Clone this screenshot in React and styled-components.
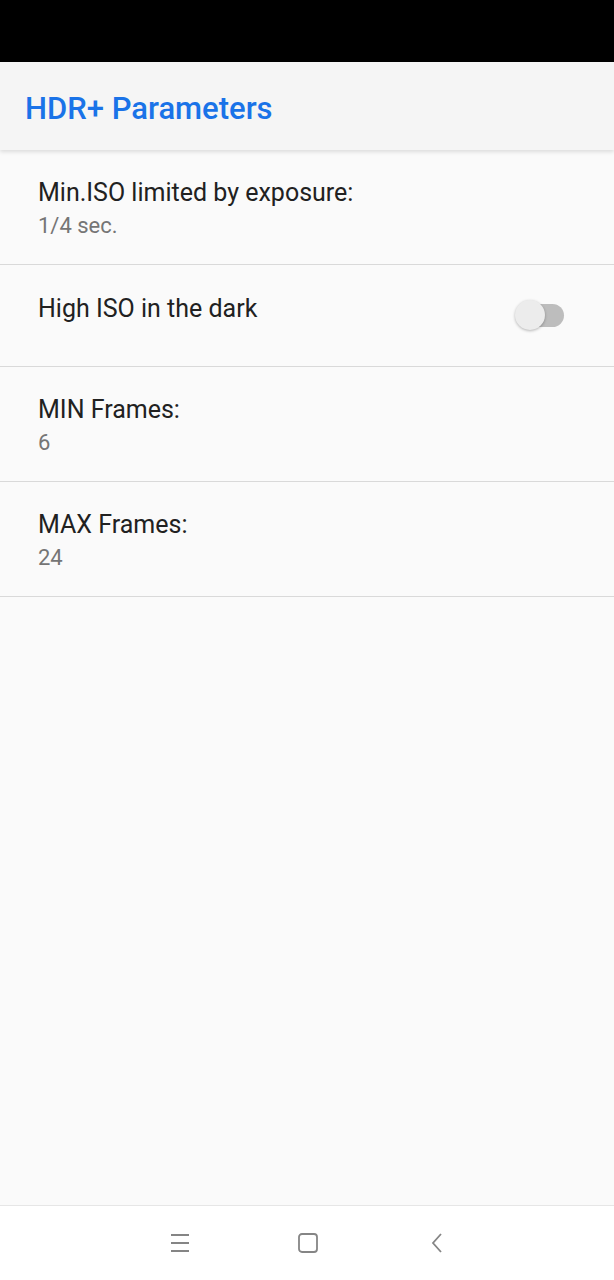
import React from 'react';
import styled, { createGlobalStyle } from 'styled-components';

const GlobalStyle = createGlobalStyle`
  html, body {
    margin: 0;
    padding: 0;
    background: #fafafa;
  }
  body {
    font-family: Roboto, "Noto Sans", sans-serif;
  }
`;

const Screen = styled.div`
  width: 614px;
  height: 1280px;
  display: flex;
  flex-direction: column;
  background: #fafafa;
  overflow: hidden;
`;

const StatusBar = styled.div`
  height: 62px;
  flex-shrink: 0;
  background: #000;
`;

const Header = styled.header`
  height: 88px;
  flex-shrink: 0;
  display: flex;
  align-items: center;
  padding-left: 25px;
  padding-top: 4px;
  box-sizing: border-box;
  background: #f5f5f5;
  box-shadow: 0 2px 4px rgba(0, 0, 0, 0.12);
  position: relative;
  z-index: 1;
`;

const Title = styled.h1`
  margin: 0;
  font-size: 31px;
  font-weight: 500;
  color: #1a73e8;
`;

const List = styled.div`
  flex: 1;
  display: flex;
  flex-direction: column;
`;

const Row = styled.div`
  display: flex;
  align-items: flex-start;
  justify-content: space-between;
  padding: ${(p) => (p.$switch ? '27px 50px 39px 38px' : '26px 38px 23px 38px')};
  border-bottom: 1px solid #d9d9d9;
`;

const Texts = styled.div`
  display: flex;
  flex-direction: column;
`;

const Label = styled.div`
  font-size: 25px;
  line-height: 33px;
  color: #212121;
`;

const Value = styled.div`
  margin-top: 2px;
  font-size: 22px;
  line-height: 30px;
  color: #757575;
`;

const Switch = styled.div`
  position: relative;
  width: 44px;
  height: 23px;
  margin-top: 12px;
  border-radius: 12px;
  background: #bdbdbd;
`;

const Thumb = styled.div`
  position: absolute;
  left: -5px;
  top: -4px;
  width: 30px;
  height: 30px;
  border-radius: 50%;
  background: #ececec;
  box-shadow: 0 1px 3px rgba(0, 0, 0, 0.28);
`;

const NavBar = styled.nav`
  height: 74px;
  flex-shrink: 0;
  display: flex;
  align-items: center;
  justify-content: center;
  gap: 108px;
  padding-left: 2px;
  background: #fff;
  border-top: 1px solid #e6e6e6;
`;

const NavIcon = styled.svg`
  width: 20px;
  height: 20px;
  stroke: #858585;
  fill: none;
  stroke-width: 1.8;
`;

const items = [
  { label: 'Min.ISO limited by exposure:', value: '1/4 sec.' },
  { label: 'High ISO in the dark', toggle: true },
  { label: 'MIN Frames:', value: '6' },
  { label: 'MAX Frames:', value: '24' },
];

export default function App() {
  return (
    <Screen>
      <GlobalStyle />
      <StatusBar />
      <Header>
        <Title>HDR+ Parameters</Title>
      </Header>
      <List>
        {items.map((it) => (
          <Row key={it.label} $switch={it.toggle}>
            <Texts>
              <Label>{it.label}</Label>
              {it.value && <Value>{it.value}</Value>}
            </Texts>
            {it.toggle && (
              <Switch>
                <Thumb />
              </Switch>
            )}
          </Row>
        ))}
      </List>
      <NavBar>
        <NavIcon viewBox="0 0 20 20">
          <path d="M1 2h18M1 10h18M1 18h18" />
        </NavIcon>
        <NavIcon viewBox="0 0 20 20">
          <rect x="1" y="1" width="18" height="18" rx="3" />
        </NavIcon>
        <NavIcon viewBox="0 0 20 20">
          <path d="M15 1l-8 9 8 9" />
        </NavIcon>
      </NavBar>
    </Screen>
  );
}
